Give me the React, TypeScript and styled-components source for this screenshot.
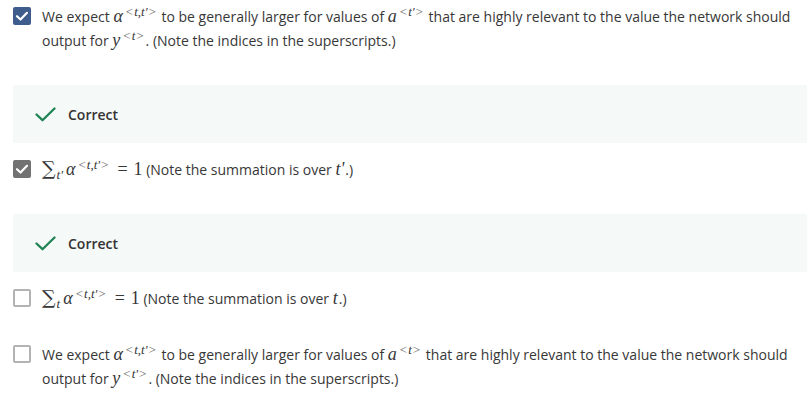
import React from 'react';
import styled, { createGlobalStyle } from 'styled-components';

const Global = createGlobalStyle`
  html, body { margin: 0; padding: 0; background: #ffffff; }
  body {
    font-family: "Open Sans", "Noto Sans", sans-serif;
    font-size: 14px;
    color: #373737;
  }
`;

const Page = styled.div`
  display: flex;
  flex-direction: column;
  padding: 5px 5px 0 13px;
`;

const OptionRow = styled.div`
  display: flex;
  align-items: flex-start;
  gap: 11px;
  margin-bottom: 32px;
`;

type BoxKind = 'selected' | 'checked' | 'empty';

const Box = styled.span<{ $kind: BoxKind }>`
  flex: 0 0 auto;
  width: 18px;
  height: 18px;
  margin-top: 2px;
  box-sizing: border-box;
  border-radius: 2px;
  display: flex;
  align-items: center;
  justify-content: center;
  background: ${p => (p.$kind === 'selected' ? '#3e5d8c' : p.$kind === 'checked' ? '#727272' : '#ffffff')};
  border: ${p => (p.$kind === 'empty' ? '2px solid #b3b3b3' : 'none')};
`;

const OptionText = styled.div`
  flex: 1;
  line-height: 24px;
  padding-right: 8px;
`;

const MI = styled.span`
  font-family: "Liberation Serif", "DejaVu Serif", serif;
  font-style: italic;
  font-size: 18px;
  line-height: 0;
  margin-right: 1px;
`;

const MR = styled.span`
  font-family: "Liberation Serif", "DejaVu Serif", serif;
  font-size: 18px;
  line-height: 0;
`;

const Rel = styled.span`
  font-family: "Liberation Serif", "DejaVu Serif", serif;
  font-size: 18px;
  line-height: 0;
  margin: 0 6px 0 7px;
`;

const Sup = styled.sup`
  font-family: "Liberation Serif", "DejaVu Serif", serif;
  font-size: 13px;
  line-height: 0;
  vertical-align: 0.5em;
  margin-left: 1px;
  margin-right: 1px;
`;

const Sub = styled.sub`
  font-family: "Liberation Serif", "DejaVu Serif", serif;
  font-style: italic;
  font-size: 13px;
  line-height: 0;
  vertical-align: -0.3em;
  margin-left: 1px;
  margin-right: 3px;
`;

const SupAngle = styled.span`
  font-style: normal;
  color: #666;
  margin: 0 1px;
`;

const SupVar = styled.span`
  font-style: italic;
`;

const SumSign = styled.span`
  font-family: "DejaVu Serif", "Liberation Serif", serif;
  font-size: 19px;
  line-height: 0;
`;

const Feedback = styled.div`
  display: flex;
  align-items: center;
  gap: 12px;
  height: 58px;
  padding-left: 22px;
  margin-bottom: 15px;
  background: #f5f9f8;
`;

const FeedbackLabel = styled.span`
  font-weight: 600;
  font-size: 14px;
  color: #333;
`;

const TickMark = () => (
  <svg width="18" height="18" viewBox="0 0 18 18">
    <polyline points="4,9.2 7.5,12.5 14,5.8" fill="none" stroke="#fff" strokeWidth="2.2" strokeLinecap="round" strokeLinejoin="round" />
  </svg>
);

const GreenCheck = () => (
  <svg width="21" height="15" viewBox="0 0 21 15">
    <polyline points="1.5,7.5 7.5,13.2 19.5,1.5" fill="none" stroke="#1f8354" strokeWidth="2.3" strokeLinecap="round" strokeLinejoin="round" />
  </svg>
);

const Checkbox = ({ kind }: { kind: BoxKind }) => (
  <Box $kind={kind}>{kind !== 'empty' && <TickMark />}</Box>
);

const Angle = ({ vars }: { vars: string[] }) => (
  <Sup>
    <SupAngle>&lt;</SupAngle>
    {vars.map((v, i) => (
      <React.Fragment key={i}>
        {i > 0 && <span>,</span>}
        <SupVar>{v}</SupVar>
      </React.Fragment>
    ))}
    <SupAngle>&gt;</SupAngle>
  </Sup>
);

const Correct = () => (
  <Feedback>
    <GreenCheck />
    <FeedbackLabel>Correct</FeedbackLabel>
  </Feedback>
);

const ExpectText = ({ aSup, ySup }: { aSup: string; ySup: string }) => (
  <OptionText>
    We expect <MI>α</MI>
    <Angle vars={['t', "t'"]} /> to be generally larger for values of <MI>a</MI>
    <Angle vars={[aSup]} /> that are highly relevant to the value the network should output for <MI>y</MI>
    <Angle vars={[ySup]} />. (Note the indices in the superscripts.)
  </OptionText>
);

const SumText = ({ idx }: { idx: string }) => (
  <OptionText>
    <SumSign>∑</SumSign>
    <Sub>{idx}</Sub>
    <MI>α</MI>
    <Angle vars={['t', "t'"]} />
    <Rel>=</Rel>
    <MR>1</MR> (Note the summation is over <MI>{idx}</MI>.)
  </OptionText>
);

export default function App() {
  return (
    <>
      <Global />
      <Page>
        <OptionRow>
          <Checkbox kind="selected" />
          <ExpectText aSup="t'" ySup="t" />
        </OptionRow>
        <Correct />
        <OptionRow>
          <Checkbox kind="checked" />
          <SumText idx="t'" />
        </OptionRow>
        <Correct />
        <OptionRow>
          <Checkbox kind="empty" />
          <SumText idx="t" />
        </OptionRow>
        <OptionRow>
          <Checkbox kind="empty" />
          <ExpectText aSup="t" ySup="t'" />
        </OptionRow>
      </Page>
    </>
  );
}
